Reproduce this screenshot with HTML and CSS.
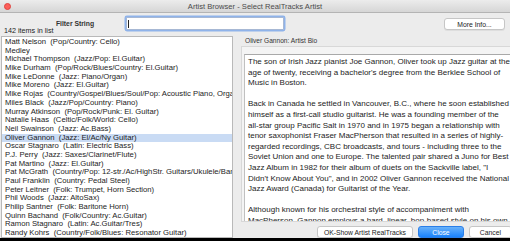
FILE: index.html
```html
<!DOCTYPE html>
<html lang="en">
<head>
    <meta charset="UTF-8">
    <title>Artist Browser - Select RealTracks Artist</title>
    <link rel="stylesheet" href="styles.css">
</head>
<body>
    <div class="window">
        <div class="titlebar">
            <span class="close-dot"></span>
            <span class="title">Artist Browser - Select RealTracks Artist</span>
        </div>

        <div class="toolbar">
            <div class="filter-side">
                <div class="filter-label">Filter String</div>
                <div class="count">142 items in list</div>
            </div>
            <div class="filter-input"><span class="caret"></span></div>
            <button class="btn more-btn">More Info...</button>
        </div>

        <div class="panes">
            <div class="list">
                <div class="row">Matt Nelson&nbsp; (Pop/Country: Cello)</div>
                <div class="row">Medley</div>
                <div class="row">Michael Thompson&nbsp; (Jazz/Pop: El.Guitar)</div>
                <div class="row">Mike Durham&nbsp; (Pop/Rock/Blues/Country: El.Guitar)</div>
                <div class="row">Mike LeDonne&nbsp; (Jazz: Piano/Organ)</div>
                <div class="row">Mike Moreno&nbsp; (Jazz: El.Guitar)</div>
                <div class="row">Mike Rojas&nbsp; (Country/Gospel/Blues/Soul/Pop: Acoustic Piano, Organ)</div>
                <div class="row">Miles Black&nbsp; (Jazz/Pop/Country: Piano)</div>
                <div class="row">Murray Atkinson&nbsp; (Pop/Rock/Punk: El. Guitar)</div>
                <div class="row">Natalie Haas&nbsp; (Celtic/Folk/World: Cello)</div>
                <div class="row">Neil Swainson&nbsp; (Jazz: Ac.Bass)</div>
                <div class="row selected">Oliver Gannon&nbsp; (Jazz: El/Ac/Ny Guitar)</div>
                <div class="row">Oscar Stagnaro&nbsp; (Latin: Electric Bass)</div>
                <div class="row">P.J. Perry&nbsp; (Jazz: Saxes/Clarinet/Flute)</div>
                <div class="row">Pat Martino&nbsp; (Jazz: El.Guitar)</div>
                <div class="row">Pat McGrath&nbsp; (Country/Pop: 12-str./Ac/HighStr. Guitars/Ukulele/Banjo)</div>
                <div class="row">Paul Franklin&nbsp; (Country: Pedal Steel)</div>
                <div class="row">Peter Leitner&nbsp; (Folk: Trumpet, Horn Section)</div>
                <div class="row">Phil Woods&nbsp; (Jazz: AltoSax)</div>
                <div class="row">Philip Santner&nbsp; (Folk: Baritone Horn)</div>
                <div class="row">Quinn Bachand&nbsp; (Folk/Country: Ac.Guitar)</div>
                <div class="row">Ramon Stagnaro&nbsp; (Latin: Ac.Guitar/Tres)</div>
                <div class="row">Randy Kohrs&nbsp; (Country/Folk/Blues: Resonator Guitar)</div>
                <div class="row">Rebeca Mauleon&nbsp; (Latin: Piano)</div>
            </div>

            <div class="bio-side">
                <div class="bio-label">Oliver Gannon: Artist Bio</div>
                <div class="bio-panel">
                    <div class="bio-text">
                        <p>The son of Irish Jazz pianist Joe Gannon, Oliver took up Jazz guitar at the<br>
                        age of twenty, receiving a bachelor's degree from the Berklee School of<br>
                        Music in Boston.</p>
                        <p>Back in Canada he settled in Vancouver, B.C., where he soon established<br>
                        himself as a first-call studio guitarist. He was a founding member of the<br>
                        all-star group Pacific Salt in 1970 and in 1975 began a relationship with<br>
                        tenor saxophonist Fraser MacPherson that resulted in a series of highly-<br>
                        regarded recordings, CBC broadcasts, and tours - including three to the<br>
                        Soviet Union and one to Europe. The talented pair shared a Juno for Best<br>
                        Jazz Album in 1982 for their album of duets on the Sackville label, "I<br>
                        Didn't Know About You", and in 2002 Oliver Gannon received the National<br>
                        Jazz Award (Canada) for Guitarist of the Year.</p>
                        <p>Although known for his orchestral style of accompaniment with<br>
                        MacPherson, Gannon employs a hard, linear, bop-based style on his own<br>
                        recordings.</p>
                    </div>
                </div>
                <div class="buttons">
                    <button class="btn ok-btn">OK-Show Artist RealTracks</button>
                    <button class="btn primary">Close</button>
                    <button class="btn">Cancel</button>
                </div>
            </div>
        </div>
    </div>
</body>
</html>
```

FILE: styles.css
```css
* {
    margin: 0;
    padding: 0;
    box-sizing: border-box;
}

body {
    background: #000;
    font-family: 'Liberation Sans', Arial, sans-serif;
    color: #1c1c1c;
    font-size: 7.7px;
}

.window {
    width: 510px;
    height: 238px;
    background: #ececec;
    overflow: hidden;
}

.titlebar {
    height: 13px;
    background: linear-gradient(#ececec, #d6d6d6);
    border-bottom: 1px solid #b4b4b4;
    display: flex;
    align-items: center;
    justify-content: center;
    position: relative;
}

.close-dot {
    position: absolute;
    left: 4px;
    top: 3px;
    width: 7px;
    height: 7px;
    border-radius: 50%;
    background: #fc605b;
    border: 1px solid #e0443f;
}

.title {
    font-size: 7.6px;
    color: #4b4b4b;
}

.toolbar {
    display: flex;
    align-items: flex-start;
    height: 23px;
    padding: 3px 5px 0 4px;
}

.filter-side {
    width: 122px;
}

.filter-label {
    text-align: center;
    padding: 3px 0 0 20px;
    height: 11px;
    line-height: 9px;
    font-weight: bold;
    color: #333;
    font-size: 6.8px;
}

.count {
    line-height: 8px;
    font-size: 7.2px;
}

.filter-input {
    width: 158px;
    height: 13px;
    margin-top: 1px;
    background: #fff;
    border: 1px solid #a7b8d4;
    box-shadow: 0 0 0 1.5px #8fb3ea;
    border-radius: 1px;
    padding: 2px 1px;
}

.caret {
    display: block;
    width: 1px;
    height: 8px;
    background: #222;
}

.btn {
    font-family: inherit;
    font-size: 6.8px;
    color: #222;
    background: #fff;
    border: 1px solid #c6c6c6;
    border-radius: 3px;
    height: 12px;
    padding: 0 4px;
    white-space: nowrap;
    box-shadow: 0 1px 0 rgba(0,0,0,0.06);
}

.more-btn {
    margin-left: auto;
    margin-top: 2px;
    width: 61px;
}

.panes {
    display: grid;
    grid-template-columns: 232px 1fr;
    column-gap: 8px;
    padding: 0 3px 0 1px;
    height: 202px;
}

.list {
    background: #fff;
    border: 1px solid #b9b9b9;
    overflow: hidden;
    padding-top: 1px;
}

.row {
    height: 8.7px;
    line-height: 8.7px;
    padding-left: 3px;
    white-space: nowrap;
}

.selected {
    background: #c9dbf4;
}

.bio-side {
    display: flex;
    flex-direction: column;
}

.bio-label {
    height: 10px;
    line-height: 9px;
    padding-left: 4px;
    font-size: 6.6px;
    color: #333;
}

.bio-panel {
    height: 176px;
    background: #f4f4f4;
    border: 1px solid #d8d8d8;
    padding: 7px 1px 0 2px;
}

.bio-text {
    height: 100%;
    background: #fff;
    border-top: 1px solid #a9a9a9;
    border-left: 1px solid #c0c0c0;
    padding: 2px 0 0 3px;
    overflow: hidden;
    font-size: 8px;
    line-height: 10.6px;
    white-space: nowrap;
}

.bio-text p {
    margin-bottom: 10.6px;
}

.buttons {
    display: flex;
    justify-content: flex-end;
    gap: 5px;
    margin-top: 4px;
}

.ok-btn {
    width: 96px;
}

.buttons .btn {
    min-width: 43px;
}

.buttons .primary {
    min-width: 46px;
    background: linear-gradient(#68b1fa, #1a82fb);
    border-color: #2a7ee8;
    color: #fff;
}
```
